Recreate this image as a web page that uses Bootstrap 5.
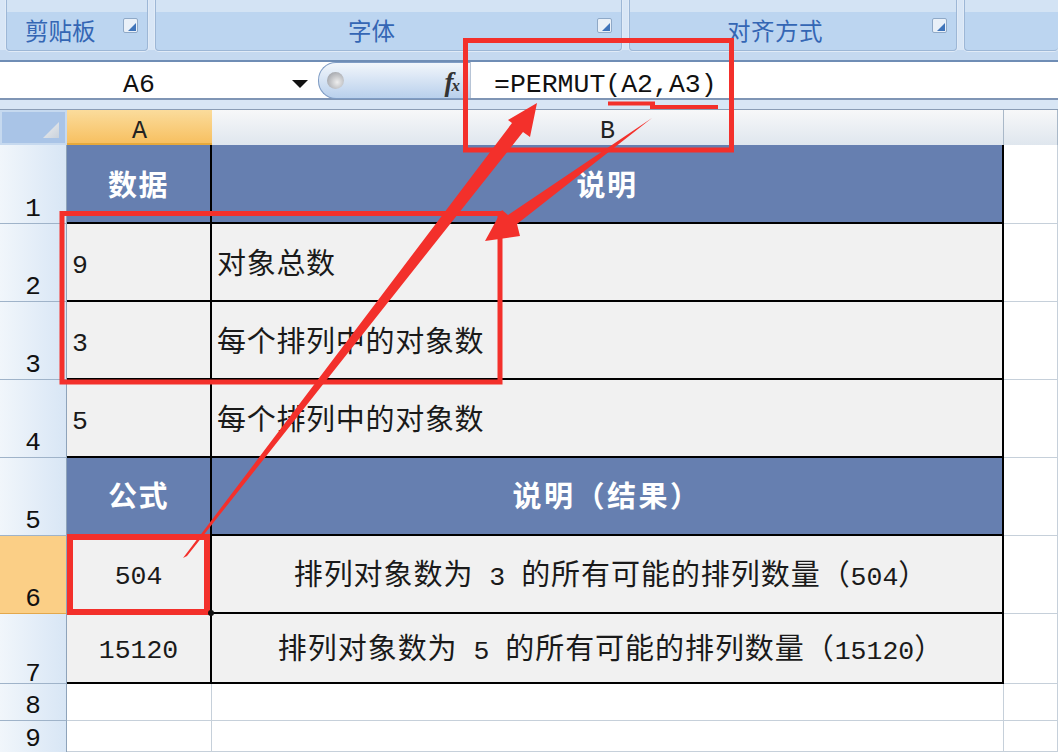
<!DOCTYPE html>
<html lang="zh"><head><meta charset="utf-8">
<link rel="stylesheet" href="https://cdn.jsdelivr.net/npm/bootstrap@5.3.0/dist/css/bootstrap.min.css">
<style>
html,body{margin:0;height:752px;overflow:hidden;background:#fff}
.xl-page{position:relative;width:1058px;height:752px;overflow:hidden;font-family:"Liberation Mono","Noto Sans CJK SC",monospace;color:#111}
.xl-ribbon{height:62px;background:linear-gradient(#d8e6f6 0 50px,#c5d9f0 50px);border-bottom:2px solid #6f8db5;padding-left:6px;gap:7px}
.xl-group{height:51px;position:relative;background:linear-gradient(#d3e3f4 0 12px,#bcd5f0 12px);border:1px solid #9db7d6;border-top:0;border-radius:0 0 4px 4px;color:#3466b4;font:400 23.5px/1 "Noto Sans CJK SC",sans-serif;padding-top:19px;box-shadow:0 0 0 1px #e1ebf7}
.g1{width:142px;padding-left:18px}.g2{width:467px;padding-left:192px}.g3{width:328px;padding-left:97px;letter-spacing:.5px}.g4{flex:1;border-right:0}
.xl-launch{position:absolute;top:18px;right:9px;width:15px;height:15px;background:#e9f0f8;border:1px solid #8fa9c7;border-radius:2px}
.xl-launch::after{content:"";position:absolute;right:1px;bottom:1px;width:8px;height:8px;background:#3f74ba;clip-path:polygon(100% 0,100% 100%,0 100%)}
.xl-fbar{height:38px;background:#fff;border-bottom:2px solid #7f95b5}
.xl-name{width:318px;font-size:26.5px;line-height:46px;text-align:center;position:relative;padding-right:40px;color:#111}
.xl-caret{position:absolute;left:292px;top:18px;width:0;height:0;border:8px solid transparent;border-top:8px solid #111;border-bottom:0}
.xl-fxbtn{width:152px;height:37px;position:relative;background:linear-gradient(#f2f6fb,#b9d0ec);border:1px solid #7f9cc4;border-radius:18px 0 0 18px;border-right:0;font:italic 700 27px/38px "Liberation Serif",serif;text-align:right;padding-right:10px;color:#333}
.xl-fxbtn small{font-size:17px;margin-left:-2px}
.xl-ball{position:absolute;left:8px;top:9px;width:17px;height:17px;border-radius:50%;background:radial-gradient(circle at 60% 60%,#eee,#8f9299)}
.xl-formula{flex:1;border-left:1px solid #b7c4d6;font-size:26.5px;line-height:46px;padding-left:23px}
.xl-strip{height:10px;background:#d8e6f5;border-bottom:1px solid #8a9db5}
.xl-grid{display:grid;grid-template-columns:67px 145px 792px 54px;grid-template-rows:35px 79px 78px 78px 78px 78px 78px 70px 37px 31px}
.xl-corner{background:#a9c4e7;position:relative;border:2px solid #c6d9ef}
.xl-corner::after{content:"";position:absolute;right:6px;bottom:5px;width:16px;height:16px;background:linear-gradient(135deg,#f0f0f0,#c9d2dc);clip-path:polygon(100% 0,100% 100%,0 100%)}
.xl-col{background:linear-gradient(#f7f8f9,#dfe6ee);border-right:1px solid #a9b8c8;font-size:25px;line-height:44px;text-align:center;color:#222;overflow:hidden}
.xl-col.on{background:linear-gradient(#fbdc9c,#f7c061);border-right:0;border-bottom:2px solid #e6a93c}
.xl-row{background:linear-gradient(90deg,#f1f6fb,#d8e6f5);border-bottom:1px solid #9fb3c9;border-right:1px solid #8ea3ba;font-size:26px;line-height:28px;text-align:center;display:flex;align-items:flex-end;justify-content:center}
.xl-row.on{background:#fbcf86;border-bottom:1px solid #e3a84c}
.xl-row.low{line-height:18px}
.xl-row.end{line-height:26px;border-bottom:0}
.xl-cell{background:#f1f1f1;border-right:2px solid #000;border-bottom:2px solid #000;font-size:29px;display:flex;align-items:center;padding:9px 0 0 5px;color:#1a1a1a;letter-spacing:.7px;white-space:pre}
.xl-lat{font-size:26.5px;letter-spacing:0}
.xl-head{background:#667fb0;color:#fff;font:700 29px/1 "Noto Sans CJK SC",sans-serif;justify-content:center;padding:0;letter-spacing:1.4px}
.xl-head.up{padding-bottom:3px}
.xl-wide{letter-spacing:2.5px}
.xl-c{justify-content:center;padding:7px 0 0}
.xl-long{padding-left:8px;letter-spacing:.95px}
.xl-blank{background:#fff;border-right:1px solid #c6d0da;border-bottom:1px solid #c6d0da}
.xl-over{position:absolute;left:0;top:0;width:1058px;height:752px;pointer-events:none}
</style></head><body>
<div class="xl-page">
 <div class="xl-ribbon d-flex">
  <div class="xl-group g1">剪贴板<span class="xl-launch"></span></div>
  <div class="xl-group g2">字体<span class="xl-launch"></span></div>
  <div class="xl-group g3">对齐方式<span class="xl-launch"></span></div>
  <div class="xl-group g4"></div>
 </div>
 <div class="xl-fbar d-flex">
  <div class="xl-name">A6<span class="xl-caret"></span></div>
  <div class="xl-fxbtn"><span class="xl-ball"></span>f<small>x</small></div>
  <div class="xl-formula">=PERMUT(A2,A3)</div>
 </div>
 <div class="xl-strip"></div>
 <div class="xl-grid">
  <div class="xl-corner"></div><div class="xl-col on">A</div><div class="xl-col">B</div><div class="xl-col"></div>
  <div class="xl-row">1</div><div class="xl-cell xl-head">数据</div><div class="xl-cell xl-head">说明</div><div class="xl-blank"></div>
  <div class="xl-row">2</div><div class="xl-cell"><span class="xl-lat">9</span></div><div class="xl-cell">对象总数</div><div class="xl-blank"></div>
  <div class="xl-row">3</div><div class="xl-cell"><span class="xl-lat">3</span></div><div class="xl-cell">每个排列中的对象数</div><div class="xl-blank"></div>
  <div class="xl-row">4</div><div class="xl-cell"><span class="xl-lat">5</span></div><div class="xl-cell">每个排列中的对象数</div><div class="xl-blank"></div>
  <div class="xl-row">5</div><div class="xl-cell xl-head up">公式</div><div class="xl-cell xl-head up xl-wide">说明（结果）</div><div class="xl-blank"></div>
  <div class="xl-row on">6</div><div class="xl-cell xl-c"><span class="xl-lat">504</span></div><div class="xl-cell xl-c xl-long"><span>排列对象数为<span class="xl-lat"> 3 </span>的所有可能的排列数量（<span class="xl-lat">504</span>）</span></div><div class="xl-blank"></div>
  <div class="xl-row low">7</div><div class="xl-cell xl-c"><span class="xl-lat">15120</span></div><div class="xl-cell xl-c xl-long"><span>排列对象数为<span class="xl-lat"> 5 </span>的所有可能的排列数量（<span class="xl-lat">15120</span>）</span></div><div class="xl-blank"></div>
  <div class="xl-row">8</div><div class="xl-blank"></div><div class="xl-blank"></div><div class="xl-blank"></div>
  <div class="xl-row end">9</div><div class="xl-blank"></div><div class="xl-blank"></div><div class="xl-blank"></div>
 </div>
 <svg class="xl-over" viewBox="0 0 1058 752" fill="none">
  <rect x="465.500" y="40.500" width="266" height="109.500" stroke="#f3302b" stroke-width="5"/>
  <rect x="62" y="213.500" width="438" height="168.500" stroke="#f3302b" stroke-width="5"/>
  <rect x="70" y="537" width="137" height="75" stroke="#f3302b" stroke-width="6"/>
  <path d="M183 558 L512 123 L508 120 L537 103 L530 137 L523 132 L187 556Z" fill="#f3302b"/>
  <path d="M652 118 L517 224 L520 236 L485 241 L502 210 L508 215Z" fill="#f3302b"/>
  <path d="M608 103.500 H655 M650 107 H718" stroke="#f3302b" stroke-width="4"/>
  <circle cx="211" cy="613" r="3" fill="#111"/>
 </svg>
</div>
<script src="https://cdn.jsdelivr.net/npm/bootstrap@5.3.0/dist/js/bootstrap.bundle.min.js"></script>
</body></html>
